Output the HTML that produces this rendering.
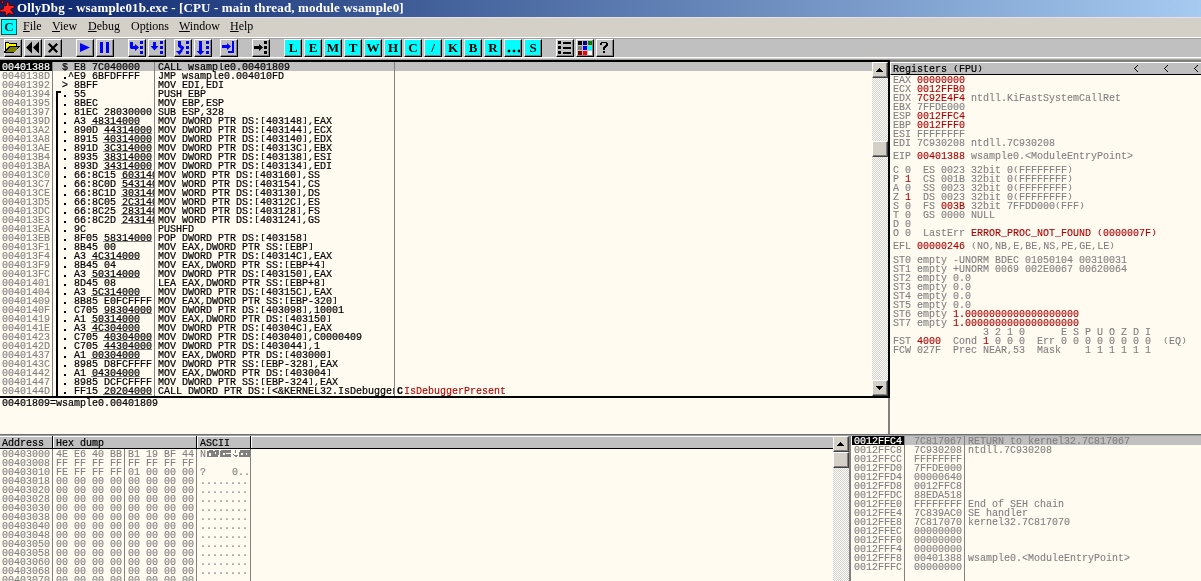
<!DOCTYPE html><html><head><meta charset="utf-8"><style>
*{margin:0;padding:0}
html,body{width:1201px;height:581px;overflow:hidden;background:#fffbf0}
body{position:relative}
#w{position:absolute;left:0;top:0;width:1201px;height:581px;overflow:hidden;will-change:transform}
div{position:absolute}
.m{font-family:"Liberation Mono",monospace;font-size:10px;line-height:9px;white-space:pre;-webkit-text-stroke-width:0.2px}
.g{color:#808080;-webkit-text-stroke-width:0.1px}.r{color:#b00000;-webkit-text-stroke-width:0.1px}.k{color:#000;-webkit-text-stroke-width:0.2px}.w{color:#fff;-webkit-text-stroke-width:0.2px}
.btn{width:18px;height:18px;box-sizing:border-box;border-top:1px solid #fff;border-left:1px solid #fff;border-right:1px solid #000;border-bottom:1px solid #000;background:#c0c0c0}
.btn:after{content:"";position:absolute;right:0;bottom:0;left:0;top:0;border-right:1px solid #808080;border-bottom:1px solid #808080}
.cy{background:#00ffff}
.bk{font-style:normal;display:inline-block;height:9px;transform:scale(0.9,0.72);transform-origin:50% 12%}.cm{font-style:normal;display:inline-block;height:9px;transform:scale(1,0.7);transform-origin:50% 60%}
.sf{font-family:"Liberation Serif",serif}
</style></head><body><div id="w"><div style="left:0;top:0;width:1201px;height:17px;background:linear-gradient(to right,#0a246a,#a6caf0)"></div><svg style="position:absolute;left:0;top:0" width="17" height="17" viewBox="0 0 17 17">
<g fill="#ff2020" stroke="#500000" stroke-width="1" stroke-linejoin="round">
<path d="M6.5 2 L9 2 L9 5.5 L14 5.5 L14.5 7.5 L10.5 9.5 L13.5 13 L12.5 15 L9 13 L7 15.5 L5 15 L5.5 12 L0 12 L0 9.5 L3.5 9 L3.5 6 L6.5 5.5 Z"/>
<path d="M1 0.8 L3.2 0.8 L3.5 3.5 L1.5 3.8 Z"/>
</g></svg><div class="sf" style="left:17px;top:0px;font-size:13px;line-height:15px;font-weight:bold;color:#fff;white-space:pre;letter-spacing:0.13px">OllyDbg - wsample01b.exe - [CPU - main thread, module wsample0]</div><div style="left:0px;top:17px;width:1201px;height:20px;background:#d4d0c8;"></div><div style="left:0px;top:17px;width:1201px;height:1px;background:#e2e2ea;"></div><div style="left:1px;top:19px;width:16px;height:16px;background:#00ffff;box-sizing:border-box;border:1px solid #006060"></div><div class="sf" style="left:3px;top:20px;width:12px;text-align:center;font-size:13px;line-height:14px;font-weight:bold;color:#002828">C</div><div class="sf" style="left:23px;top:19px;font-size:12px;line-height:14px;color:#000;white-space:pre;text-underline-offset:1px"><u>F</u>ile</div><div class="sf" style="left:52px;top:19px;font-size:12px;line-height:14px;color:#000;white-space:pre;text-underline-offset:1px"><u>V</u>iew</div><div class="sf" style="left:88px;top:19px;font-size:12px;line-height:14px;color:#000;white-space:pre;text-underline-offset:1px"><u>D</u>ebug</div><div class="sf" style="left:131px;top:19px;font-size:12px;line-height:14px;color:#000;white-space:pre;text-underline-offset:1px">Op<u>t</u>ions</div><div class="sf" style="left:179px;top:19px;font-size:12px;line-height:14px;color:#000;white-space:pre;text-underline-offset:1px"><u>W</u>indow</div><div class="sf" style="left:230px;top:19px;font-size:12px;line-height:14px;color:#000;white-space:pre;text-underline-offset:1px"><u>H</u>elp</div><div style="left:0px;top:37px;width:1201px;height:1px;background:#ffffff;"></div><div style="left:0px;top:38px;width:1201px;height:1px;background:#a0a0a0;"></div><div style="left:0px;top:39px;width:1201px;height:18px;background:#c0c0c0;"></div><div style="left:0px;top:57px;width:1201px;height:1px;background:#ffffff;"></div><div style="left:0px;top:58px;width:1201px;height:1px;background:#d4d0c8;"></div><div style="left:0px;top:59px;width:1201px;height:1px;background:#a0a0a0;"></div><div style="left:0px;top:60px;width:889px;height:2px;background:#000000;"></div><div style="left:889px;top:60px;width:312px;height:2px;background:#808080;"></div><div class="btn " style="left:4px;top:39px"></div><div class="btn " style="left:24px;top:39px"></div><div class="btn " style="left:44px;top:39px"></div><div class="btn " style="left:76px;top:39px"></div><div class="btn " style="left:96px;top:39px"></div><div class="btn " style="left:128px;top:39px"></div><div class="btn " style="left:148px;top:39px"></div><div class="btn " style="left:174px;top:39px"></div><div class="btn " style="left:194px;top:39px"></div><div class="btn " style="left:220px;top:39px"></div><div class="btn " style="left:252px;top:39px"></div><div class="btn " style="left:556px;top:39px"></div><div class="btn " style="left:576px;top:39px"></div><div class="btn " style="left:596px;top:39px"></div><svg style="position:absolute;left:4px;top:39px" width="18" height="18" viewBox="0 0 18 18" shape-rendering="crispEdges"><path d="M1 3h4v1h8v3h-11v7h-1z" fill="#000"/><path d="M2 4h3v1h7v2h-8v1h-1v1h-1z" fill="#ffff00"/><path d="M4 7h12v1h-1v1h-1v1h-1v1h-1v1h-1v1h-1v1h-11v-1h1v-1h1v-1h1v-1h1v-1h1v-1h1z" fill="#000"/><path d="M5 8h9v1h-1v2h-1v1h-1v1h-9v-1h1v-1h1v-1h1v-1h1z" fill="#808000"/></svg><svg style="position:absolute;left:24px;top:39px" width="18" height="18" viewBox="0 0 18 18" shape-rendering="crispEdges"><path d="M2 8.5 L8 2.5 V14.5 Z M9 8.5 L15 2.5 V14.5 Z" fill="#000" shape-rendering="auto"/></svg><svg style="position:absolute;left:44px;top:39px" width="18" height="18" viewBox="0 0 18 18" shape-rendering="crispEdges"><path d="M4.8 4.8 L13.2 13.2 M13.2 4.8 L4.8 13.2" stroke="#000" stroke-width="2.3" shape-rendering="auto"/></svg><svg style="position:absolute;left:76px;top:39px" width="18" height="18" viewBox="0 0 18 18" shape-rendering="crispEdges"><path d="M4 4 L4 13 L14 8.5 Z" fill="#0000ff" shape-rendering="auto"/></svg><svg style="position:absolute;left:96px;top:39px" width="18" height="18" viewBox="0 0 18 18" shape-rendering="crispEdges"><path d="M4 3h3v11h-3z M10 3h3v11h-3z" fill="#0000ff"/></svg><svg style="position:absolute;left:128px;top:39px" width="18" height="18" viewBox="0 0 18 18" shape-rendering="crispEdges"><path d="M2 3H5V7H7V5L11 8.5L7 12V10H3L2 9Z" fill="#0000ff" shape-rendering="auto"/><path d="M12 2h3v3h-3z M12 7h3v3h-3z M12 12h3v3h-3z" fill="#0000ff"/></svg><svg style="position:absolute;left:148px;top:39px" width="18" height="18" viewBox="0 0 18 18" shape-rendering="crispEdges"><path d="M5 3H8V7H10.5L6.5 11.5L2.5 7H5Z" fill="#0000ff" shape-rendering="auto"/><path d="M12 2h3v3h-3z M12 7h3v3h-3z M12 12h3v3h-3z" fill="#0000ff"/></svg><svg style="position:absolute;left:174px;top:39px" width="18" height="18" viewBox="0 0 18 18" shape-rendering="crispEdges"><path d="M4 2H7V6L10 8V9.5L8 11.5H9L5.5 16L2 12H5L7 10L4 7.5Z" fill="#0000ff" shape-rendering="auto"/><path d="M12 2h3v3h-3z M12 7h3v3h-3z M12 12h3v3h-3z" fill="#0000ff"/></svg><svg style="position:absolute;left:194px;top:39px" width="18" height="18" viewBox="0 0 18 18" shape-rendering="crispEdges"><path d="M5 2H8V12H10.5L6.5 16L2.5 12H5Z" fill="#0000ff" shape-rendering="auto"/><path d="M12 2h3v3h-3z M12 7h3v3h-3z M12 12h3v3h-3z" fill="#0000ff"/></svg><svg style="position:absolute;left:220px;top:39px" width="18" height="18" viewBox="0 0 18 18" shape-rendering="crispEdges"><path d="M2 6H7V4L11 7.5L7 11V9H2Z" fill="#0000ff" shape-rendering="auto"/><path d="M12 2H14V14H8V12H12Z" fill="#0000ff"/></svg><svg style="position:absolute;left:252px;top:39px" width="18" height="18" viewBox="0 0 18 18" shape-rendering="crispEdges"><path d="M2 7H7V5L11 8.5L7 12V10H2Z" fill="#000" shape-rendering="auto"/><path d="M12 2h3v3h-3z M12 7h3v3h-3z M12 12h3v3h-3z" fill="#000"/></svg><div class="btn cy" style="left:284px;top:39px"><div class="sf" style="left:0;top:1px;width:16px;text-align:center;font-size:13px;line-height:14px;font-weight:bold;color:#000">L</div></div><div class="btn cy" style="left:304px;top:39px"><div class="sf" style="left:0;top:1px;width:16px;text-align:center;font-size:13px;line-height:14px;font-weight:bold;color:#000">E</div></div><div class="btn cy" style="left:324px;top:39px"><div class="sf" style="left:0;top:1px;width:16px;text-align:center;font-size:13px;line-height:14px;font-weight:bold;color:#000">M</div></div><div class="btn cy" style="left:344px;top:39px"><div class="sf" style="left:0;top:1px;width:16px;text-align:center;font-size:13px;line-height:14px;font-weight:bold;color:#000">T</div></div><div class="btn cy" style="left:364px;top:39px"><div class="sf" style="left:0;top:1px;width:16px;text-align:center;font-size:13px;line-height:14px;font-weight:bold;color:#000">W</div></div><div class="btn cy" style="left:384px;top:39px"><div class="sf" style="left:0;top:1px;width:16px;text-align:center;font-size:13px;line-height:14px;font-weight:bold;color:#000">H</div></div><div class="btn cy" style="left:404px;top:39px"><div class="sf" style="left:0;top:1px;width:16px;text-align:center;font-size:13px;line-height:14px;font-weight:bold;color:#000">C</div></div><div class="btn cy" style="left:424px;top:39px"><div class="sf" style="left:0;top:1px;width:16px;text-align:center;font-size:13px;line-height:14px;font-weight:bold;color:#000">/</div></div><div class="btn cy" style="left:444px;top:39px"><div class="sf" style="left:0;top:1px;width:16px;text-align:center;font-size:13px;line-height:14px;font-weight:bold;color:#000">K</div></div><div class="btn cy" style="left:464px;top:39px"><div class="sf" style="left:0;top:1px;width:16px;text-align:center;font-size:13px;line-height:14px;font-weight:bold;color:#000">B</div></div><div class="btn cy" style="left:484px;top:39px"><div class="sf" style="left:0;top:1px;width:16px;text-align:center;font-size:13px;line-height:14px;font-weight:bold;color:#000">R</div></div><div class="btn cy" style="left:504px;top:39px"><svg style="position:absolute;left:0;top:0" width="17" height="17"><path d="M3 10h2v2h-2z M8 10h2v2h-2z M13 10h2v2h-2z M2.5 10.5h3v1h-3z M7.5 10.5h3v1h-3z M12.5 10.5h3v1h-3z M3.5 9.5h1v3h-1z M8.5 9.5h1v3h-1z M13.5 9.5h1v3h-1z" fill="#000"/></svg></div><div class="btn cy" style="left:524px;top:39px"><div class="sf" style="left:0;top:1px;width:16px;text-align:center;font-size:13px;line-height:14px;font-weight:bold;color:#000">S</div></div><svg style="position:absolute;left:556px;top:39px" width="18" height="18" viewBox="0 0 18 18" shape-rendering="crispEdges"><path d="M2 2h3v3h-3z M2 7h3v3h-3z M2 12h3v3h-3z M7 3h8v2h-8z M7 8h8v2h-8z M7 13h8v2h-8z" fill="#000"/></svg><svg style="position:absolute;left:576px;top:39px" width="18" height="18" viewBox="0 0 18 18" shape-rendering="crispEdges"><rect x="2" y="2" width="4" height="4" fill="#000000"/><rect x="7" y="2" width="4" height="4" fill="#000080"/><rect x="12" y="2" width="4" height="4" fill="#008000"/><rect x="2" y="7" width="4" height="4" fill="#808080"/><rect x="7" y="7" width="4" height="4" fill="#0000ff"/><rect x="12" y="7" width="4" height="4" fill="#00ffff"/><rect x="2" y="12" width="4" height="4" fill="#800000"/><rect x="7" y="12" width="4" height="4" fill="#ff0000"/><rect x="12" y="12" width="4" height="4" fill="#ffffff"/></svg><svg style="position:absolute;left:596px;top:39px" width="18" height="18" viewBox="0 0 18 18" shape-rendering="crispEdges"><path d="M5 3h6v1h1v3h-1v1h-1v1h-1v2h-2v-3h1v-1h1v-1h1v-2h-4v2h-2v-2h1z M7 12h2v2h-2z" fill="#000"/></svg><div style="left:0px;top:62px;width:872px;height:334px;background:#fffbf0;"></div><div style="left:0px;top:62px;width:52px;height:9px;background:#000000;"></div><div style="left:53px;top:62px;width:819px;height:9px;background:#c0c0c0;"></div><div style="left:52px;top:62px;width:1px;height:334px;background:#808080;"></div><div style="left:154px;top:62px;width:1px;height:334px;background:#808080;"></div><div style="left:394px;top:62px;width:1px;height:334px;background:#808080;"></div><div class="m g" style="left:2px;top:63px;width:50px;overflow:hidden"><span class="w">00401388</span>
0040138D
00401392
00401394
00401395
00401397
0040139D
004013A2
004013A8
004013AE
004013B4
004013BA
004013C0
004013C7
004013CE
004013D5
004013DC
004013E3
004013EA
004013EB
004013F1
004013F4
004013F9
004013FC
00401401
00401404
00401409
0040140F
00401419
0040141E
00401423
0040142D
00401437
0040143C
00401442
00401447
0040144D</div><div style="left:53px;top:62px;width:101px;height:334px;overflow:hidden"><div style="left:38px;top:62px;width:49px;height:1px;background:#808080"></div><div style="left:50px;top:71px;width:49px;height:1px;background:#808080"></div><div style="left:50px;top:80px;width:49px;height:1px;background:#808080"></div><div style="left:50px;top:89px;width:49px;height:1px;background:#808080"></div><div style="left:50px;top:98px;width:49px;height:1px;background:#808080"></div><div style="left:50px;top:107px;width:49px;height:1px;background:#808080"></div><div style="left:68px;top:116px;width:49px;height:1px;background:#808080"></div><div style="left:68px;top:125px;width:49px;height:1px;background:#808080"></div><div style="left:68px;top:134px;width:49px;height:1px;background:#808080"></div><div style="left:68px;top:143px;width:49px;height:1px;background:#808080"></div><div style="left:68px;top:152px;width:49px;height:1px;background:#808080"></div><div style="left:68px;top:161px;width:49px;height:1px;background:#808080"></div><div style="left:50px;top:179px;width:49px;height:1px;background:#808080"></div><div style="left:38px;top:197px;width:49px;height:1px;background:#808080"></div><div style="left:38px;top:215px;width:49px;height:1px;background:#808080"></div><div style="left:38px;top:233px;width:49px;height:1px;background:#808080"></div><div style="left:50px;top:251px;width:49px;height:1px;background:#808080"></div><div style="left:38px;top:260px;width:49px;height:1px;background:#808080"></div><div style="left:38px;top:269px;width:49px;height:1px;background:#808080"></div><div style="left:50px;top:278px;width:49px;height:1px;background:#808080"></div><div style="left:50px;top:287px;width:49px;height:1px;background:#808080"></div><div style="left:38px;top:296px;width:49px;height:1px;background:#808080"></div><div style="left:38px;top:314px;width:49px;height:1px;background:#808080"></div><div style="left:50px;top:332px;width:49px;height:1px;background:#808080"></div></div><div class="m k" style="left:56px;top:63px;width:98px;overflow:hidden"> $ E8 7C040000
  ^E9 6BFDFFFF
 &gt; 8BFF
   55
   8BEC
   81EC 28030000
   A3 48314000
   890D 44314000
   8915 40314000
   891D 3C314000
   8935 38314000
   893D 34314000
   66:8C15 60314000
   66:8C0D 54314000
   66:8C1D 30314000
   66:8C05 2C314000
   66:8C25 28314000
   66:8C2D 24314000
   9C
   8F05 58314000
   8B45 00
   A3 4C314000
   8B45 04
   A3 50314000
   8D45 08
   A3 5C314000
   8B85 E0FCFFFF
   C705 98304000 01000100
   A1 50314000
   A3 4C304000
   C705 40304000 090400C0
   C705 44304000 01000000
   A1 00304000
   8985 D8FCFFFF
   A1 04304000
   8985 DCFCFFFF
   FF15 20204000</div><div class="m k" style="left:158px;top:63px;width:236px;overflow:hidden">CALL wsample0.00401809
JMP wsample0.004010FD
MOV EDI<i class="cm">,</i>EDI
PUSH EBP
MOV EBP<i class="cm">,</i>ESP
SUB ESP<i class="cm">,</i>328
MOV DWORD PTR DS:<i class="bk">[</i>403148<i class="bk">]</i><i class="cm">,</i>EAX
MOV DWORD PTR DS:<i class="bk">[</i>403144<i class="bk">]</i><i class="cm">,</i>ECX
MOV DWORD PTR DS:<i class="bk">[</i>403140<i class="bk">]</i><i class="cm">,</i>EDX
MOV DWORD PTR DS:<i class="bk">[</i>40313C<i class="bk">]</i><i class="cm">,</i>EBX
MOV DWORD PTR DS:<i class="bk">[</i>403138<i class="bk">]</i><i class="cm">,</i>ESI
MOV DWORD PTR DS:<i class="bk">[</i>403134<i class="bk">]</i><i class="cm">,</i>EDI
MOV WORD PTR DS:<i class="bk">[</i>403160<i class="bk">]</i><i class="cm">,</i>SS
MOV WORD PTR DS:<i class="bk">[</i>403154<i class="bk">]</i><i class="cm">,</i>CS
MOV WORD PTR DS:<i class="bk">[</i>403130<i class="bk">]</i><i class="cm">,</i>DS
MOV WORD PTR DS:<i class="bk">[</i>40312C<i class="bk">]</i><i class="cm">,</i>ES
MOV WORD PTR DS:<i class="bk">[</i>403128<i class="bk">]</i><i class="cm">,</i>FS
MOV WORD PTR DS:<i class="bk">[</i>403124<i class="bk">]</i><i class="cm">,</i>GS
PUSHFD
POP DWORD PTR DS:<i class="bk">[</i>403158<i class="bk">]</i>
MOV EAX<i class="cm">,</i>DWORD PTR SS:<i class="bk">[</i>EBP<i class="bk">]</i>
MOV DWORD PTR DS:<i class="bk">[</i>40314C<i class="bk">]</i><i class="cm">,</i>EAX
MOV EAX<i class="cm">,</i>DWORD PTR SS:<i class="bk">[</i>EBP+4<i class="bk">]</i>
MOV DWORD PTR DS:<i class="bk">[</i>403150<i class="bk">]</i><i class="cm">,</i>EAX
LEA EAX<i class="cm">,</i>DWORD PTR SS:<i class="bk">[</i>EBP+8<i class="bk">]</i>
MOV DWORD PTR DS:<i class="bk">[</i>40315C<i class="bk">]</i><i class="cm">,</i>EAX
MOV EAX<i class="cm">,</i>DWORD PTR SS:<i class="bk">[</i>EBP-320<i class="bk">]</i>
MOV DWORD PTR DS:<i class="bk">[</i>403098<i class="bk">]</i><i class="cm">,</i>10001
MOV EAX<i class="cm">,</i>DWORD PTR DS:<i class="bk">[</i>403150<i class="bk">]</i>
MOV DWORD PTR DS:<i class="bk">[</i>40304C<i class="bk">]</i><i class="cm">,</i>EAX
MOV DWORD PTR DS:<i class="bk">[</i>403040<i class="bk">]</i><i class="cm">,</i>C0000409
MOV DWORD PTR DS:<i class="bk">[</i>403044<i class="bk">]</i><i class="cm">,</i>1
MOV EAX<i class="cm">,</i>DWORD PTR DS:<i class="bk">[</i>403000<i class="bk">]</i>
MOV DWORD PTR SS:<i class="bk">[</i>EBP-328<i class="bk">]</i><i class="cm">,</i>EAX
MOV EAX<i class="cm">,</i>DWORD PTR DS:<i class="bk">[</i>403004<i class="bk">]</i>
MOV DWORD PTR SS:<i class="bk">[</i>EBP-324<i class="bk">]</i><i class="cm">,</i>EAX
CALL DWORD PTR DS:<i class="bk">[</i>&lt;&amp;KERNEL32.IsDebuggerPresent&gt;<i class="bk">]</i></div><div style="left:64px;top:77px;width:2px;height:2px;background:#000"></div><div style="left:64px;top:95px;width:2px;height:2px;background:#000"></div><div style="left:64px;top:104px;width:2px;height:2px;background:#000"></div><div style="left:64px;top:113px;width:2px;height:2px;background:#000"></div><div style="left:64px;top:122px;width:2px;height:2px;background:#000"></div><div style="left:64px;top:131px;width:2px;height:2px;background:#000"></div><div style="left:64px;top:140px;width:2px;height:2px;background:#000"></div><div style="left:64px;top:149px;width:2px;height:2px;background:#000"></div><div style="left:64px;top:158px;width:2px;height:2px;background:#000"></div><div style="left:64px;top:167px;width:2px;height:2px;background:#000"></div><div style="left:64px;top:176px;width:2px;height:2px;background:#000"></div><div style="left:64px;top:185px;width:2px;height:2px;background:#000"></div><div style="left:64px;top:194px;width:2px;height:2px;background:#000"></div><div style="left:64px;top:203px;width:2px;height:2px;background:#000"></div><div style="left:64px;top:212px;width:2px;height:2px;background:#000"></div><div style="left:64px;top:221px;width:2px;height:2px;background:#000"></div><div style="left:64px;top:230px;width:2px;height:2px;background:#000"></div><div style="left:64px;top:239px;width:2px;height:2px;background:#000"></div><div style="left:64px;top:248px;width:2px;height:2px;background:#000"></div><div style="left:64px;top:257px;width:2px;height:2px;background:#000"></div><div style="left:64px;top:266px;width:2px;height:2px;background:#000"></div><div style="left:64px;top:275px;width:2px;height:2px;background:#000"></div><div style="left:64px;top:284px;width:2px;height:2px;background:#000"></div><div style="left:64px;top:293px;width:2px;height:2px;background:#000"></div><div style="left:64px;top:302px;width:2px;height:2px;background:#000"></div><div style="left:64px;top:311px;width:2px;height:2px;background:#000"></div><div style="left:64px;top:320px;width:2px;height:2px;background:#000"></div><div style="left:64px;top:329px;width:2px;height:2px;background:#000"></div><div style="left:64px;top:338px;width:2px;height:2px;background:#000"></div><div style="left:64px;top:347px;width:2px;height:2px;background:#000"></div><div style="left:64px;top:356px;width:2px;height:2px;background:#000"></div><div style="left:64px;top:365px;width:2px;height:2px;background:#000"></div><div style="left:64px;top:374px;width:2px;height:2px;background:#000"></div><div style="left:64px;top:383px;width:2px;height:2px;background:#000"></div><div style="left:64px;top:392px;width:2px;height:2px;background:#000"></div><div style="left:56px;top:91px;width:2px;height:305px;background:#000;"></div><div style="left:56px;top:91px;width:5px;height:2px;background:#000;"></div><div class="m" style="left:397px;top:387px;font-weight:bold;color:#000">C</div><div class="m r" style="left:404px;top:387px">IsDebuggerPresent</div><div style="left:872px;top:62px;width:16px;height:334px;background-color:#fff;background-image:linear-gradient(45deg,#d4d0c8 25%,transparent 25%,transparent 75%,#d4d0c8 75%),linear-gradient(45deg,#d4d0c8 25%,transparent 25%,transparent 75%,#d4d0c8 75%);background-size:2px 2px;background-position:0 0,1px 1px"></div><div style="left:872px;top:62px;width:16px;height:16px;box-sizing:border-box;background:#d4d0c8;border-top:1px solid #fff;border-left:1px solid #fff;border-right:1px solid #404040;border-bottom:1px solid #404040;box-shadow:inset -1px -1px 0 #808080"></div><svg style="position:absolute;left:872px;top:62px" width="16" height="16" shape-rendering="crispEdges"><path d="M7 6h1v1h-1z M6 7h3v1h-3z M5 8h5v1h-5z M4 9h7v1h-7z" fill="#000"/></svg><div style="left:872px;top:141px;width:16px;height:16px;box-sizing:border-box;background:#d4d0c8;border-top:1px solid #fff;border-left:1px solid #fff;border-right:1px solid #404040;border-bottom:1px solid #404040;box-shadow:inset -1px -1px 0 #808080"></div><div style="left:872px;top:380px;width:16px;height:16px;box-sizing:border-box;background:#d4d0c8;border-top:1px solid #fff;border-left:1px solid #fff;border-right:1px solid #404040;border-bottom:1px solid #404040;box-shadow:inset -1px -1px 0 #808080"></div><svg style="position:absolute;left:872px;top:380px" width="16" height="16" shape-rendering="crispEdges"><path d="M4 6h7v1h-7z M5 7h5v1h-5z M6 8h3v1h-3z M7 9h1v1h-1z" fill="#000"/></svg><div style="left:888px;top:60px;width:2px;height:338px;background:#000;"></div><div style="left:0px;top:396px;width:890px;height:2px;background:#000;"></div><div style="left:0px;top:398px;width:888px;height:36px;background:#fffbf0;"></div><div class="m" style="left:2px;top:399px;color:#000;">00401809=wsample0.00401809</div><div style="left:888px;top:398px;width:2px;height:36px;background:#808080;"></div><div style="left:890px;top:62px;width:311px;height:372px;background:#fffbf0;"></div><div style="left:890px;top:62px;width:311px;height:13px;box-sizing:border-box;background:#c0c0c0;border-top:1px solid #fff;border-left:1px solid #fff;border-bottom:1px solid #000"></div><div class="m k" style="left:893px;top:65px">Registers <i class="bk">(</i>FPU<i class="bk">)</i></div><svg style="position:absolute;left:1133px;top:65px" width="6" height="7" shape-rendering="crispEdges"><path d="M4 0h1v1h-1z M3 1h1v1h-1z M2 2h1v1h-1z M1 3h1v1h-1z M2 4h1v1h-1z M3 5h1v1h-1z M4 6h1v1h-1z" fill="#000"/></svg><svg style="position:absolute;left:1163px;top:65px" width="6" height="7" shape-rendering="crispEdges"><path d="M4 0h1v1h-1z M3 1h1v1h-1z M2 2h1v1h-1z M1 3h1v1h-1z M2 4h1v1h-1z M3 5h1v1h-1z M4 6h1v1h-1z" fill="#000"/></svg><svg style="position:absolute;left:1193px;top:65px" width="6" height="7" shape-rendering="crispEdges"><path d="M4 0h1v1h-1z M3 1h1v1h-1z M2 2h1v1h-1z M1 3h1v1h-1z M2 4h1v1h-1z M3 5h1v1h-1z M4 6h1v1h-1z" fill="#000"/></svg><div class="m" style="left:893px;top:76px"><span class="g">EAX </span><span class="r">00000000</span></div><div class="m" style="left:893px;top:85px"><span class="g">ECX </span><span class="r">0012FFB0</span></div><div class="m" style="left:893px;top:94px"><span class="g">EDX </span><span class="r">7C92E4F4</span><span class="g"> ntdll.KiFastSystemCallRet</span></div><div class="m" style="left:893px;top:103px"><span class="g">EBX 7FFDE000</span></div><div class="m" style="left:893px;top:112px"><span class="g">ESP </span><span class="r">0012FFC4</span></div><div class="m" style="left:893px;top:121px"><span class="g">EBP </span><span class="r">0012FFF0</span></div><div class="m" style="left:893px;top:130px"><span class="g">ESI FFFFFFFF</span></div><div class="m" style="left:893px;top:139px"><span class="g">EDI 7C930208 ntdll.7C930208</span></div><div class="m" style="left:893px;top:152px"><span class="g">EIP </span><span class="r">00401388</span><span class="g"> wsample0.&lt;ModuleEntryPoint&gt;</span></div><div class="m" style="left:893px;top:166px"><span class="g">C 0  ES 0023 32bit 0<i class="bk">(</i>FFFFFFFF<i class="bk">)</i></span></div><div class="m" style="left:893px;top:175px"><span class="g">P </span><span class="r">1</span><span class="g">  CS 001B 32bit 0<i class="bk">(</i>FFFFFFFF<i class="bk">)</i></span></div><div class="m" style="left:893px;top:184px"><span class="g">A 0  SS 0023 32bit 0<i class="bk">(</i>FFFFFFFF<i class="bk">)</i></span></div><div class="m" style="left:893px;top:193px"><span class="g">Z </span><span class="r">1</span><span class="g">  DS 0023 32bit 0<i class="bk">(</i>FFFFFFFF<i class="bk">)</i></span></div><div class="m" style="left:893px;top:202px"><span class="g">S 0  FS </span><span class="r">003B</span><span class="g"> 32bit 7FFDD000<i class="bk">(</i>FFF<i class="bk">)</i></span></div><div class="m" style="left:893px;top:211px"><span class="g">T 0  GS 0000 NULL</span></div><div class="m" style="left:893px;top:220px"><span class="g">D 0</span></div><div class="m" style="left:893px;top:229px"><span class="g">O 0  LastErr </span><span class="r">ERROR_PROC_NOT_FOUND <i class="bk">(</i>0000007F<i class="bk">)</i></span></div><div class="m" style="left:893px;top:242px"><span class="g">EFL </span><span class="r">00000246</span><span class="g"> <i class="bk">(</i>NO<i class="cm">,</i>NB<i class="cm">,</i>E<i class="cm">,</i>BE<i class="cm">,</i>NS<i class="cm">,</i>PE<i class="cm">,</i>GE<i class="cm">,</i>LE<i class="bk">)</i></span></div><div class="m" style="left:893px;top:256px"><span class="g">ST0 empty -UNORM BDEC 01050104 00310031</span></div><div class="m" style="left:893px;top:265px"><span class="g">ST1 empty +UNORM 0069 002E0067 00620064</span></div><div class="m" style="left:893px;top:274px"><span class="g">ST2 empty 0.0</span></div><div class="m" style="left:893px;top:283px"><span class="g">ST3 empty 0.0</span></div><div class="m" style="left:893px;top:292px"><span class="g">ST4 empty 0.0</span></div><div class="m" style="left:893px;top:301px"><span class="g">ST5 empty 0.0</span></div><div class="m" style="left:893px;top:310px"><span class="g">ST6 empty </span><span class="r">1.0000000000000000000</span></div><div class="m" style="left:893px;top:319px"><span class="g">ST7 empty </span><span class="r">1.0000000000000000000</span></div><div class="m" style="left:893px;top:328px"><span class="g">               3 2 1 0      E S P U O Z D I</span></div><div class="m" style="left:893px;top:337px"><span class="g">FST </span><span class="r">4000</span><span class="g">  Cond </span><span class="r">1</span><span class="g"> 0 0 0  Err 0 0 0 0 0 0 0 0  <i class="bk">(</i>EQ<i class="bk">)</i></span></div><div class="m" style="left:893px;top:346px"><span class="g">FCW 027F  Prec NEAR<i class="cm">,</i>53  Mask    1 1 1 1 1 1</span></div><div style="left:0px;top:434px;width:1201px;height:1px;background:#707070;"></div><div style="left:0px;top:435px;width:1201px;height:1px;background:#a0a0a0;"></div><div style="left:0px;top:436px;width:849px;height:145px;background:#fffbf0;"></div><div style="left:0;top:436px;width:833px;height:13px;box-sizing:border-box;background:#c0c0c0;border-top:1px solid #fff;border-bottom:1px solid #000"></div><div style="left:52px;top:436px;width:1px;height:12px;background:#000;"></div><div style="left:53px;top:437px;width:1px;height:11px;background:#fff;"></div><div style="left:196px;top:436px;width:1px;height:12px;background:#000;"></div><div style="left:197px;top:437px;width:1px;height:11px;background:#fff;"></div><div style="left:250px;top:436px;width:1px;height:12px;background:#000;"></div><div style="left:251px;top:437px;width:1px;height:11px;background:#fff;"></div><div class="m" style="left:2px;top:439px;color:#000;">Address</div><div class="m" style="left:56px;top:439px;color:#000;">Hex dump</div><div class="m" style="left:200px;top:439px;color:#000;">ASCII</div><div style="left:52px;top:449px;width:1px;height:132px;background:#808080;"></div><div style="left:124px;top:449px;width:1px;height:132px;background:#808080;"></div><div style="left:196px;top:449px;width:1px;height:132px;background:#808080;"></div><div style="left:250px;top:449px;width:1px;height:132px;background:#808080;"></div><div class="m g" style="left:2px;top:450px">00403000
00403008
00403010
00403018
00403020
00403028
00403030
00403038
00403040
00403048
00403050
00403058
00403060
00403068
00403070</div><div class="m g" style="left:56px;top:450px">4E E6 40 BB
FF FF FF FF
FE FF FF FF
00 00 00 00
00 00 00 00
00 00 00 00
00 00 00 00
00 00 00 00
00 00 00 00
00 00 00 00
00 00 00 00
00 00 00 00
00 00 00 00
00 00 00 00
00 00 00 00</div><div class="m g" style="left:128px;top:450px">B1 19 BF 44
FF FF FF FF
01 00 00 00
00 00 00 00
00 00 00 00
00 00 00 00
00 00 00 00
00 00 00 00
00 00 00 00
00 00 00 00
00 00 00 00
00 00 00 00
00 00 00 00
00 00 00 00
00 00 00 00</div><div class="m g" style="left:200px;top:450px">

?
........
........
........
........
........
........
........
........
........
........
........
........</div><div class="m g" style="left:232px;top:468px">0..</div><div class="m g" style="left:200px;top:450px">N</div><svg style="position:absolute;left:206px;top:450px" width="45" height="7" shape-rendering="crispEdges"><g fill="#808080">
<rect x="1" y="0" width="12" height="7"/><rect x="14" y="0" width="11" height="7"/><rect x="33" y="0" width="11" height="7"/>
<path d="M29 0h1v5h2v1h-1v1h-1v-0h-1v-1h-1v-1h2z M27 4h1v1h-1z"/></g>
<g fill="#fffbf0"><rect x="1" y="0" width="2" height="1"/><rect x="3" y="3" width="2" height="3"/><rect x="7" y="0" width="2" height="1"/><rect x="9" y="2" width="1" height="2"/><rect x="12" y="5" width="1" height="2"/>
<rect x="17" y="3" width="2" height="2"/><rect x="20" y="3" width="5" height="1"/><rect x="14" y="0" width="1" height="1"/>
<rect x="33" y="0" width="1" height="2"/><rect x="35" y="3" width="2" height="2"/><rect x="40" y="3" width="1" height="2"/></g></svg><div style="left:833px;top:436px;width:16px;height:145px;background-color:#fff;background-image:linear-gradient(45deg,#d4d0c8 25%,transparent 25%,transparent 75%,#d4d0c8 75%),linear-gradient(45deg,#d4d0c8 25%,transparent 25%,transparent 75%,#d4d0c8 75%);background-size:2px 2px;background-position:0 0,1px 1px"></div><div style="left:833px;top:436px;width:16px;height:16px;box-sizing:border-box;background:#d4d0c8;border-top:1px solid #fff;border-left:1px solid #fff;border-right:1px solid #404040;border-bottom:1px solid #404040;box-shadow:inset -1px -1px 0 #808080"></div><svg style="position:absolute;left:833px;top:436px" width="16" height="16" shape-rendering="crispEdges"><path d="M7 6h1v1h-1z M6 7h3v1h-3z M5 8h5v1h-5z M4 9h7v1h-7z" fill="#000"/></svg><div style="left:833px;top:452px;width:16px;height:16px;box-sizing:border-box;background:#d4d0c8;border-top:1px solid #fff;border-left:1px solid #fff;border-right:1px solid #404040;border-bottom:1px solid #404040;box-shadow:inset -1px -1px 0 #808080"></div><div style="left:849px;top:436px;width:2px;height:145px;background:#808080;"></div><div style="left:851px;top:436px;width:350px;height:145px;background:#fffbf0;"></div><div style="left:852px;top:436px;width:52px;height:9px;background:#000;"></div><div style="left:905px;top:436px;width:296px;height:9px;background:#c0c0c0;"></div><div style="left:904px;top:436px;width:1px;height:145px;background:#808080;"></div><div style="left:964px;top:436px;width:1px;height:145px;background:#808080;"></div><div class="m g" style="left:854px;top:437px"><span class="w">0012FFC4</span>
0012FFC8
0012FFCC
0012FFD0
0012FFD4
0012FFD8
0012FFDC
0012FFE0
0012FFE4
0012FFE8
0012FFEC
0012FFF0
0012FFF4
0012FFF8
0012FFFC</div><div class="m g" style="left:914px;top:437px">7C817067
7C930208
FFFFFFFF
7FFDE000
00000640
0012FFC8
88EDA518
FFFFFFFF
7C839AC0
7C817070
00000000
00000000
00000000
00401388
00000000</div><div class="m g" style="left:968px;top:437px">RETURN to kernel32.7C817067
ntdll.7C930208





End of SEH chain
SE handler
kernel32.7C817070



wsample0.&lt;ModuleEntryPoint&gt;
</div></div></body></html>
